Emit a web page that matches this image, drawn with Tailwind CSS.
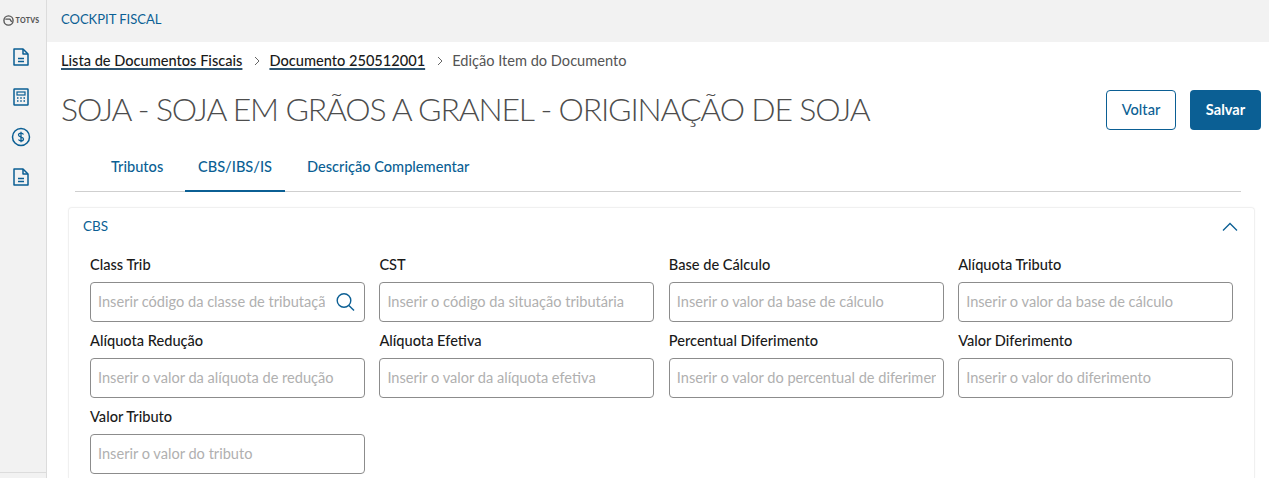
<!DOCTYPE html>
<html lang="pt">
<head>
<meta charset="utf-8">
<script src="https://cdn.jsdelivr.net/npm/@tailwindcss/browser@4"></script>
</head>
<body class="h-[478px] w-[1269px] overflow-hidden bg-white font-['Lato','Noto_Sans',sans-serif] flex">
<aside class="w-[47px] h-[478px] shrink-0 bg-[#f2f2f2] border-r border-[#dcdcdc] flex flex-col items-center relative pr-[4px]">
  <div class="h-[38px] flex items-center gap-[2px] text-[#555] pt-0.5">
    <svg class="w-[11px] h-[11px]" viewBox="0 0 12 12" fill="none" stroke="#555" stroke-width="1.5"><circle cx="6" cy="6" r="5"/><path d="M2.5 4.5h5l2 3"/></svg>
    <span class="text-[7px] font-black tracking-[0.3px] leading-none">TOTVS</span>
  </div>
  <div class="flex flex-col items-center gap-[20px] mt-[9px] text-[#0b5f94]">
    <svg class="w-[20px] h-[20px]" viewBox="0 0 20 20" fill="none" stroke="currentColor" stroke-width="1.5" stroke-linejoin="round"><path d="M3 2h9l5 5v11H3z"/><path d="M12 2v5h5M7 11.500h6M7 14.500h6"/></svg>
    <svg class="w-[20px] h-[20px]" viewBox="0 0 20 20" fill="none" stroke="currentColor" stroke-width="1.5"><rect x="3" y="2" width="14" height="16" rx=".5"/><rect x="6" y="5" width="8" height="3" stroke-width="1.200"/><path d="M6 11h1.500M9.250 11h1.500M12.500 11H14M6 14h1.500M9.250 14h1.500M12.500 14H14"/></svg>
    <svg class="w-[20px] h-[20px]" viewBox="0 0 20 20" fill="none" stroke="currentColor" stroke-width="1.5"><circle cx="10" cy="10" r="8.500"/><path d="M12.500 7.500C12 6.500 11 6.200 10 6.200c-1.500 0-2.500.8-2.500 1.900 0 2.600 5 1.300 5 3.800 0 1.100-1 1.900-2.500 1.900-1 0-2-.3-2.500-1.300M10 4.800v10.400" stroke-width="1.300"/></svg>
    <svg class="w-[20px] h-[20px]" viewBox="0 0 20 20" fill="none" stroke="currentColor" stroke-width="1.5" stroke-linejoin="round"><path d="M3 2h9l5 5v11H3z"/><path d="M12 2v5h5M7 11.500h6M7 14.500h6"/></svg>
  </div>
  <div class="absolute left-0 right-0 top-[472px] border-t border-[#dcdcdc]"></div>
</aside>
<main class="flex-1 min-w-0 flex flex-col">
  <header class="h-[42px] bg-[#f2f2f2] flex items-center pl-[14px] pb-[3px] text-[13px] text-[#0b5f94] shrink-0">COCKPIT FISCAL</header>
  <nav class="flex items-center h-[20px] mt-[9px] pl-[14px] text-[14.600px] text-[#555]">
    <a class="font-medium text-[#1a1a1a] underline decoration-2 decoration-[#2f5570] underline-offset-2">Lista de Documentos Fiscais</a>
    <svg class="w-[10px] h-[10px] ml-[10px] mr-[7px]" viewBox="0 0 10 10" fill="none" stroke="#666" stroke-width="1"><path d="M3 1l4 4-4 4"/></svg>
    <a class="font-medium text-[#1a1a1a] underline decoration-2 decoration-[#2f5570] underline-offset-2">Documento 250512001</a>
    <svg class="w-[10px] h-[10px] ml-[10px] mr-[7px]" viewBox="0 0 10 10" fill="none" stroke="#666" stroke-width="1"><path d="M3 1l4 4-4 4"/></svg>
    <span>Edição Item do Documento</span>
  </nav>
  <div class="flex items-center justify-between h-[48px] pl-[14px] pr-[8px] mt-[15px]">
    <h1 class="text-[32px] leading-[46px] mb-[2px] tracking-[-1.180px] text-[#4d4d4d] font-light whitespace-nowrap">SOJA - SOJA EM GRÃOS A GRANEL - ORIGINAÇÃO DE SOJA</h1>
    <div class="flex gap-[14px]">
      <button class="w-[70px] h-[40px] rounded-[4px] border-[1.500px] border-[#0b5f94] text-[14.600px] font-medium text-[#0b5f94] bg-white">Voltar</button>
      <button class="w-[71px] h-[40px] rounded-[4px] bg-[#0b5f94] text-[14.600px] font-bold text-white">Salvar</button>
    </div>
  </div>
  <div class="mx-[28px] mt-[16px] h-[42px] border-b border-[#cfcfcf] flex text-[14.600px] font-medium text-[#0b5f94] w-[1166px]">
    <div class="pl-[36px] pt-[6px] w-[110px] whitespace-nowrap">Tributos</div>
    <div class="h-[42px] w-[100px] text-center pt-[6px] border-b-[2px] border-[#0b5f94] whitespace-nowrap">CBS/IBS/IS</div>
    <div class="pl-[22px] pt-[6px] whitespace-nowrap">Descrição Complementar</div>
  </div>
  <section class="mx-[21px] mt-[15px] w-[1187px] flex-1 rounded-t-[4px] border border-b-0 border-[#f0f0f0] shadow-[0_0_2px_rgba(0,0,0,0.04)]">
    <div class="flex items-center justify-between h-[37px] pl-[14px] pr-[16px] text-[13.500px] text-[#0b5f94]">
      <span>CBS</span>
      <svg class="w-[16px] h-[10px]" viewBox="0 0 16 10" fill="none" stroke="#0b5f94" stroke-width="1.300"><path d="M1 8.500L8 1.500l7 7"/></svg>
    </div>
    <div class="grid grid-cols-[275px_275px_275px_275px] gap-x-[14.400px] pl-[21px] text-[14.600px]">
      <label class="block h-[76px]"><span class="block h-[20px] mt-[10px] leading-[20px] font-medium text-[#1a1a1a]">Class Trib</span>
        <span class="mt-[7px] relative block"><input class="w-full h-[40px] rounded-[4px] border border-[#8c8c8c] pl-[7px] pr-[39px] pb-[2px] placeholder:text-[#b0b0b0]" placeholder="Inserir código da classe de tributação"><svg class="absolute right-[9px] top-[10px] w-[20px] h-[20px]" viewBox="0 0 20 20" fill="none" stroke="#0b5f94" stroke-width="1.400"><circle cx="8" cy="8.500" r="6.800"/><path d="M12.900 13.400L18 18.500"/></svg></span></label>
      <label class="block h-[76px]"><span class="block h-[20px] mt-[10px] leading-[20px] font-medium text-[#1a1a1a]">CST</span>
        <input class="mt-[7px] w-full h-[40px] rounded-[4px] border border-[#8c8c8c] px-[7px] pb-[2px] placeholder:text-[#b0b0b0]" placeholder="Inserir o código da situação tributária"></label>
      <label class="block h-[76px]"><span class="block h-[20px] mt-[10px] leading-[20px] font-medium text-[#1a1a1a]">Base de Cálculo</span>
        <input class="mt-[7px] w-full h-[40px] rounded-[4px] border border-[#8c8c8c] px-[7px] pb-[2px] placeholder:text-[#b0b0b0]" placeholder="Inserir o valor da base de cálculo"></label>
      <label class="block h-[76px]"><span class="block h-[20px] mt-[10px] leading-[20px] font-medium text-[#1a1a1a]">Alíquota Tributo</span>
        <input class="mt-[7px] w-full h-[40px] rounded-[4px] border border-[#8c8c8c] px-[7px] pb-[2px] placeholder:text-[#b0b0b0]" placeholder="Inserir o valor da base de cálculo"></label>
      <label class="block h-[76px]"><span class="block h-[20px] mt-[10px] leading-[20px] font-medium text-[#1a1a1a]">Alíquota Redução</span>
        <input class="mt-[7px] w-full h-[40px] rounded-[4px] border border-[#8c8c8c] px-[7px] pb-[2px] placeholder:text-[#b0b0b0]" placeholder="Inserir o valor da alíquota de redução"></label>
      <label class="block h-[76px]"><span class="block h-[20px] mt-[10px] leading-[20px] font-medium text-[#1a1a1a]">Alíquota Efetiva</span>
        <input class="mt-[7px] w-full h-[40px] rounded-[4px] border border-[#8c8c8c] px-[7px] pb-[2px] placeholder:text-[#b0b0b0]" placeholder="Inserir o valor da alíquota efetiva"></label>
      <label class="block h-[76px]"><span class="block h-[20px] mt-[10px] leading-[20px] font-medium text-[#1a1a1a]">Percentual Diferimento</span>
        <input class="mt-[7px] w-full h-[40px] rounded-[4px] border border-[#8c8c8c] px-[7px] pb-[2px] placeholder:text-[#b0b0b0]" placeholder="Inserir o valor do percentual de diferimento"></label>
      <label class="block h-[76px]"><span class="block h-[20px] mt-[10px] leading-[20px] font-medium text-[#1a1a1a]">Valor Diferimento</span>
        <input class="mt-[7px] w-full h-[40px] rounded-[4px] border border-[#8c8c8c] px-[7px] pb-[2px] placeholder:text-[#b0b0b0]" placeholder="Inserir o valor do diferimento"></label>
      <label class="block h-[76px]"><span class="block h-[20px] mt-[10px] leading-[20px] font-medium text-[#1a1a1a]">Valor Tributo</span>
        <input class="mt-[7px] w-full h-[40px] rounded-[4px] border border-[#8c8c8c] px-[7px] pb-[2px] placeholder:text-[#b0b0b0]" placeholder="Inserir o valor do tributo"></label>
    </div>
  </section>
</main>
</body>
</html>
